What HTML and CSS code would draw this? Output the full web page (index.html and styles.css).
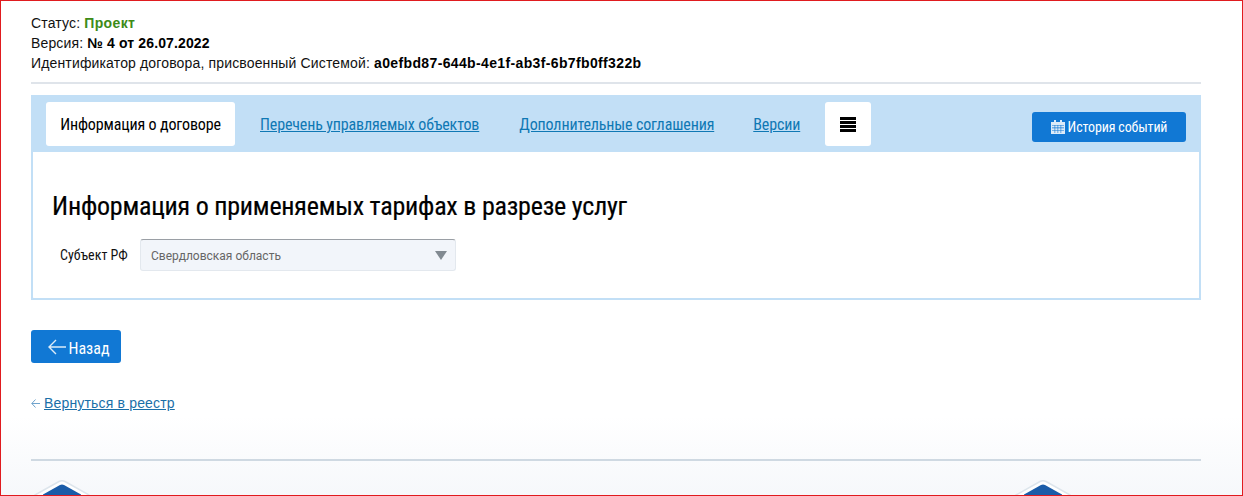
FILE: index.html
```html
<!DOCTYPE html>
<html lang="ru">
<head>
<meta charset="utf-8">
<title>Информация о договоре</title>
<link rel="stylesheet" href="styles.css">
</head>
<body>
<div class="page">
  <main class="content">
    <section class="meta">
      <div>Статус: <b class="green">Проект</b></div>
      <div>Версия: <b class="version">№ 4 от 26.07.2022</b></div>
      <div>Идентификатор договора, присвоенный Системой: <b>a0efbd87-644b-4e1f-ab3f-6b7fb0ff322b</b></div>
    </section>
    <section class="panel">
      <nav class="tabs">
        <span class="tab active">Информация о договоре</span>
        <a class="tab-link" href="#">Перечень управляемых объектов</a>
        <a class="tab-link" href="#">Дополнительные соглашения</a>
        <a class="tab-link last" href="#">Версии</a>
        <span class="tab burger"><svg width="16" height="15" viewBox="0 0 16 15"><path d="M0 0h16v3H0zM0 4h16v3H0zM0 8h16v3H0zM0 12h16v3H0z" fill="#000"/></svg></span>
        <button class="btn history"><svg class="cal" width="14" height="14" viewBox="0 0 14 14"><path fill="#dcebf8" d="M0 2h3V0h2v2h4V0h2v2h3v12H0z"/><path fill="#1178d4" d="M1 5h12v.6H1zM1 7.6h12v.6H1zM1 10.2h12v.6H1zM3.600 5h.6v8h-.6zM6.600 5h.6v8h-.6zM9.600 5h.6v8h-.6z"/></svg> <span>История событий</span></button>
      </nav>
      <div class="body">
        <h1>Информация о применяемых тарифах в разрезе услуг</h1>
        <div class="field">
          <label>Субъект РФ</label>
          <div class="select"><span>Свердловская область</span><i class="caret"></i></div>
        </div>
      </div>
    </section>
    <button class="btn back"><svg width="18" height="16" viewBox="0 0 18 16"><path d="M8 1 1 8l7 7M1 8h17" fill="none" stroke="#dcebf8" stroke-width="1.4"/></svg><span>Назад</span></button>
    <div class="return">
      <svg width="9" height="9" viewBox="0 0 9 9"><path d="M4.500.5.800 4.500l3.700 4M.8 4.500H9" fill="none" stroke="#6fa3cc" stroke-width="1"/></svg>
      <a href="#">Вернуться в реестр</a>
    </div>
  </main>
  <footer class="footer">
    <div class="footer-rule"></div>
    <div class="logos">
      <svg width="60" height="30" viewBox="0 0 60 30"><path d="M3 15 27 1.500Q30 0 33 1.500L57 15v15H3z" fill="#fff" stroke="#dde5ec" stroke-width="1.500"/><path d="M11 14.500 28 5q2-1 4 0l17 9.500V30H11z" fill="#1a5ca8"/></svg>
      <svg width="60" height="30" viewBox="0 0 60 30"><path d="M3 15 27 1.500Q30 0 33 1.500L57 15v15H3z" fill="#fff" stroke="#dde5ec" stroke-width="1.500"/><path d="M11 14.500 28 5q2-1 4 0l17 9.500V30H11z" fill="#1a5ca8"/></svg>
    </div>
  </footer>
</div>
</body>
</html>
```
FILE: styles.css
```css
* { box-sizing: border-box; }
html, body { margin: 0; padding: 0; }
body { background: #fff; }
.page {
  width: 1243px;
  height: 496px;
  overflow: hidden;
  border: 1px solid #e01b1f;
  display: flex;
  flex-direction: column;
  background: linear-gradient(#fff 0, #fff 415px, #f6f8fb 100%);
  font-family: "Liberation Sans", Arial, sans-serif;
  color: #000;
}
.content { padding: 12px 41px 0 30px; height: 440px; flex: none; }
.meta {
  font-size: 14px;
  line-height: 20px;
  height: 71px;
  letter-spacing: .15px;
  border-bottom: 2px solid #dfe4ea;
  margin-bottom: 11px;
  color: #111;
}
.meta b { color: #000; letter-spacing: .36px; }
.meta .version { letter-spacing: .13px; }
.meta .green { color: #3d8b17; }
.panel { height: 205px; background: #c2dff6; display: flex; flex-direction: column; }
.tabs {
  height: 57px;
  flex: none;
  display: flex;
  align-items: flex-start;
  padding: 7px 15px 0;
  font-family: Roboto, sans-serif;
  font-stretch: condensed;
  font-size: 16px;
  letter-spacing: -.14px;
}
.tab {
  background: #fff;
  height: 44px;
  border-radius: 3px;
  display: flex;
  align-items: center;
  justify-content: center;
}
.tab.active { width: 189px; color: #000; }
.tab-link { color: #0f78b4; margin: 13px 0 0 25px; line-height: 19px; }
.tab-link + .tab-link { margin-left: 40px; }
.tab-link + .tab-link.last { margin-left: 39px; }
.burger { width: 46px; margin-left: 25px; }
.btn {
  border: 0;
  border-radius: 3px;
  background: #1178d4;
  color: #fff;
  font-family: Roboto, sans-serif;
  font-stretch: condensed;
  font-weight: 450;
  display: flex;
  align-items: center;
  justify-content: center;
  padding: 0;
}
.history { width: 154px; height: 30px; font-size: 14px; letter-spacing: -.14px; margin: 10px 0 0 auto; gap: 3px; }
.body {
  flex: 1;
  background: #fff;
  border: 2px solid #c2dff6;
  border-top: 0;
  padding: 0 19px;
  border-radius: 0 0 3px 3px;
}
h1 {
  margin: 38px 0 0;
  font-family: Roboto, sans-serif;
  font-stretch: condensed;
  font-weight: 400;
  font-size: 26px;
  letter-spacing: -.23px;
  line-height: 32px;
  color: #000;
  -webkit-text-stroke: .2px #000;
}
.field { display: flex; align-items: center; margin: 17px 0 0; }
.field label {
  width: 88px;
  padding-left: 8px;
  font-family: Roboto, sans-serif;
  font-stretch: condensed;
  font-weight: 450;
  font-size: 14px;
  color: #111;
}
.select {
  width: 316px;
  height: 32px;
  background: #f2f5fa;
  border: 1px solid #e3e8ee;
  border-top: 1px solid #9a9fa5;
  border-radius: 3px;
  display: flex;
  align-items: center;
  justify-content: space-between;
  padding: 2px 8px 0 10px;
  font-family: Roboto, sans-serif;
  font-size: 12px;
  color: #666;
}
.caret { width: 0; height: 0; margin-top: -2px; border: 6px solid transparent; border-top: 9px solid #828a91; border-bottom: 0; }
.back { width: 90px; height: 33px; margin-top: 30px; font-size: 16px; gap: 3px; padding: 3px 0 0 5px; }
.back svg { margin-top: -3px; }
.return {
  margin-top: 31px;
  font-size: 14px;
  line-height: 18px;
  letter-spacing: .17px;
  display: flex;
  align-items: center;
  gap: 4px;
}
.return a { color: #1a6fa8; }
.footer { padding: 0 41px 0 30px; flex: none; }
.footer-rule { height: 2px; background: #cfd9e2; margin-top: 18px; }
.logos { display: flex; padding-left: 1px; gap: 921px; margin-top: 19px; }
```
